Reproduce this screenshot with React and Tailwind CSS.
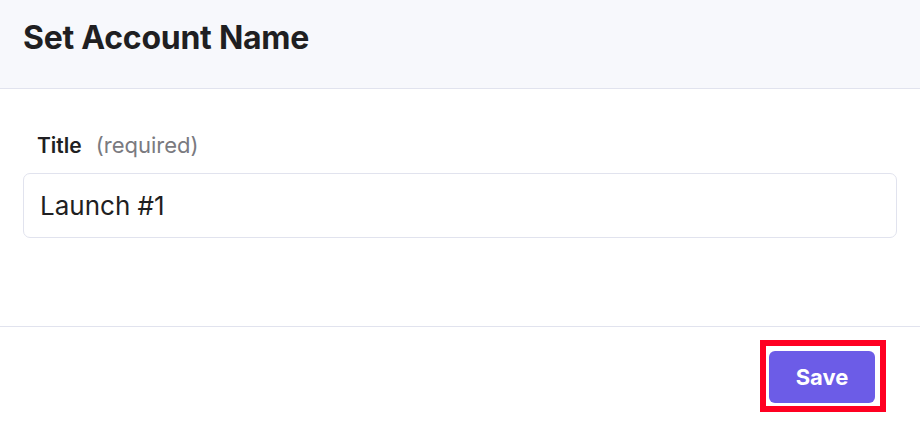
export default function App() {
  return (
    <div className="flex h-[424px] w-[920px] flex-col bg-white font-['Inter',sans-serif] text-[#1f1f22]">
      <div className="flex h-[89px] items-start border-b border-[#e1e3ee] bg-[#f7f8fc] px-[23px] pt-[18px]">
        <h1 className="text-[32px] leading-[40px] font-bold tracking-[-0.25px]">Set Account Name</h1>
      </div>

      <div className="flex-1 px-[23px] pt-[40px]">
        <label className="flex h-[30px] items-baseline gap-[14px] pl-[14px] text-[21px]">
          <span className="font-semibold">Title</span>
          <span className="text-[22px] text-[#7a7a80]">(required)</span>
        </label>
        <div className="mt-[14px] flex h-[65px] items-center rounded-[7px] border border-[#e1e3ee] px-[16px]">
          <span className="text-[26px]">Launch #1</span>
        </div>
      </div>

      <div className="flex h-[98px] justify-end border-t border-[#e1e3ee] pr-[45px] pt-[24px]">
        <div className="relative h-[52px]">
          <button className="h-[52px] w-[106px] rounded-[6px] bg-[#6c5ce7] text-[22px] font-bold text-white">
            Save
          </button>
          {/* annotation box */}
          <div className="pointer-events-none absolute -bottom-[9px] -left-[9px] -right-[11px] -top-[11px] border-[6px] border-[#ff0022]" />
        </div>
      </div>
    </div>
  );
}
